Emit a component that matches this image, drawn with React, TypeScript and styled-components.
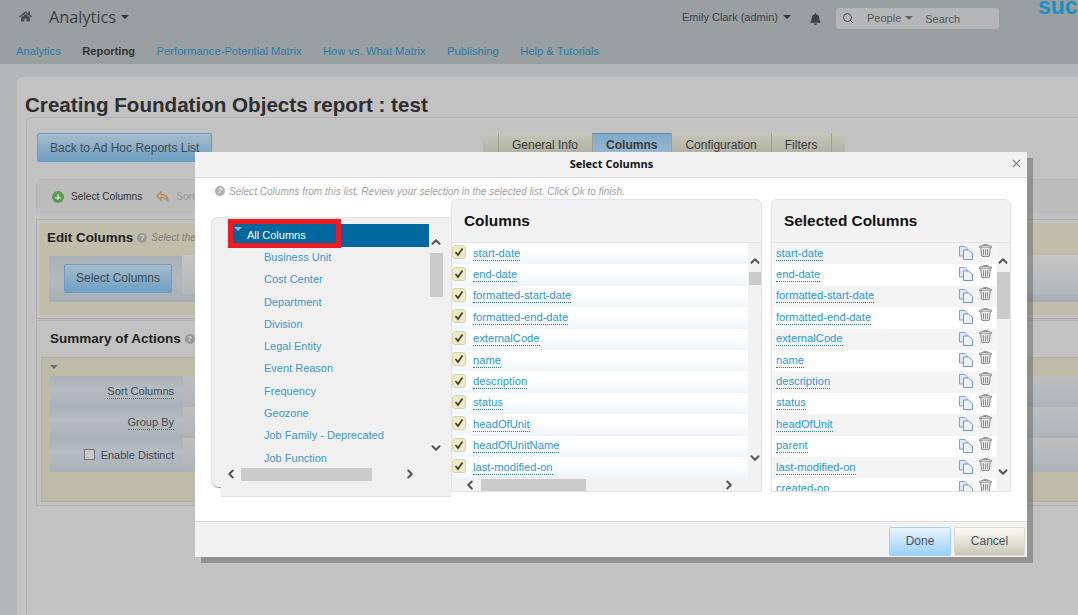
import React from 'react';
import styled, { createGlobalStyle } from 'styled-components';
import { FaHome, FaBell } from 'react-icons/fa';
import { FiSearch, FiX, FiChevronUp, FiChevronDown, FiChevronLeft, FiChevronRight } from 'react-icons/fi';

const GlobalStyle = createGlobalStyle`
  html, body { margin: 0; padding: 0; height: 100%; overflow: hidden; }
  body { background: #b5b6b7; font-family: "Liberation Sans", Arial, sans-serif; color: #333; }
  * { box-sizing: border-box; }
`;

const Page = styled.div`
  position: relative;
  width: 1078px;
  height: 615px;
  overflow: hidden;
`;

const TopHeader = styled.header`
  height: 64px;
  background: #9a9fa2;
  padding: 0 0 0 19px;
  position: relative;
`;

const HeaderRow = styled.div`
  display: flex;
  align-items: center;
  height: 36px;
`;

const HomeIcon = styled(FaHome)`
  width: 13px;
  height: 13px;
  color: #4a4d4e;
  margin-right: 17px;
  margin-top: -3px;
`;

const ModuleTitle = styled.div`
  font-family: "Open Sans", sans-serif;
  font-size: 16.3px;
  color: #3c3f41;
  display: flex;
  align-items: center;
  gap: 5px;
  margin-top: -2px;
`;

const Caret = styled.span<{ $size?: number; $color?: string }>`
  display: inline-block;
  width: 0;
  height: 0;
  border-left: ${p => p.$size ?? 4}px solid transparent;
  border-right: ${p => p.$size ?? 4}px solid transparent;
  border-top: ${p => p.$size ?? 4}px solid ${p => p.$color ?? '#333'};
`;

const UserArea = styled.div`
  margin-left: auto;
  display: flex;
  align-items: center;
  margin-right: 79px;
`;

const UserName = styled.div`
  font-size: 11px;
  color: #3f4245;
  display: flex;
  align-items: center;
  gap: 5px;
  margin-right: 19px;
  margin-top: -2px;
`;

const Bell = styled(FaBell)`
  width: 11px;
  height: 12px;
  color: #3f4245;
  margin-right: 15px;
  margin-top: 1px;
`;

const SearchBox = styled.div`
  width: 163px;
  height: 21px;
  border-radius: 3px;
  background: #b4b6b7;
  display: flex;
  align-items: center;
  padding-left: 6px;
  font-size: 11px;
  color: #55585a;
`;

const SearchGlyph = styled(FiSearch)`
  width: 12px;
  height: 12px;
  color: #4a4d4e;
  margin-right: 13px;
`;

const PeoplePick = styled.span`
  display: flex;
  align-items: center;
  gap: 4px;
  margin-right: 12px;
  margin-top: -1px;
`;

const SearchLabel = styled.span`
  margin-top: 2px;
`;

const Brand = styled.div`
  position: absolute;
  top: -7px;
  left: 1038px;
  font-size: 23px;
  font-weight: 700;
  color: #1c8fc2;
`;

const NavRow = styled.nav`
  display: flex;
  gap: 21.5px;
  margin: 9px 0 0 -3px;
  font-size: 11.2px;
`;

const NavItem = styled.span<{ $active?: boolean }>`
  font-weight: ${p => (p.$active ? 700 : 400)};
  color: ${p => (p.$active ? '#333' : '#2c7da6')};
`;

const Content = styled.main`
  margin: 13px 0 0 17px;
  height: 600px;
  background: #c2c2c2;
  border-radius: 6px 0 0 0;
  padding: 14px 0 0 8px;
`;

const ReportTitle = styled.h1`
  margin: 0;
  font-size: 20.6px;
  line-height: 27px;
  font-weight: 700;
  color: #2f2f2f;
  white-space: nowrap;
`;

const ReportBody = styled.div`
  border: 1px solid #b3b3b3;
  border-right: none;
  border-radius: 6px 0 0 0;
  height: 500px;
  padding: 15px 0 0 10px;
  margin: -1px 0 0 1px;
`;

const TopRow = styled.div`
  display: flex;
  align-items: flex-start;
`;

const BackButton = styled.div`
  width: 175px;
  height: 29px;
  border: 1px solid #6b9dc0;
  border-radius: 2px;
  background: linear-gradient(#a6bccb, #6f9fc4);
  font-size: 12px;
  color: #3d4a54;
  padding: 7px 0 0 12px;
  white-space: nowrap;
`;

const Tabs = styled.div`
  display: flex;
  height: 24px;
  margin-left: 271px;
  background: linear-gradient(#c6c6ba, #adada0);
  border-radius: 8px 8px 0 0;
  padding: 0 13px 0 15px;
  font-size: 12px;
`;

const Tab = styled.div<{ $active?: boolean }>`
  padding: 5px 14px 0 13px;
  color: #3a3a3a;
  white-space: nowrap;
  border-left: 1px solid #a0a096;
  &:last-child { border-right: 1px solid #a0a096; }
  ${p => p.$active && 'background: linear-gradient(#7fa9c9, #a0bad0); font-weight: 700; border-top: 1px solid #5b8fb8; padding-top: 4px;'}
`;

const StepBar = styled.div`
  margin: 17px 0 0 -1px;
  width: 1060px;
  height: 34px;
  border: 1px solid #b5b5b5;
  border-bottom: none;
  border-radius: 6px 0 0 0;
  background: #bcbcbc;
  display: flex;
  align-items: center;
  padding-left: 15px;
  font-size: 10.2px;
  color: #333;
`;

const StepDot = styled.span`
  width: 12px;
  height: 12px;
  border-radius: 50%;
  background: #5a9c5a;
  margin-right: 7px;
  color: #d8e8d8;
  font-size: 11px;
  font-weight: 700;
  line-height: 12px;
  text-align: center;
`;

const SortIcon = styled.svg`
  width: 14px;
  height: 13px;
  margin: 0 6px 0 14px;
`;

const StepFaded = styled.span`
  color: #999;
`;

const EditOuter = styled.section`
  margin: 6px 0 0 -1px;
  border: 1px solid #aeaeae;
  padding: 3px;
  height: 100px;
  width: 1060px;
`;

const EditPanel = styled.div`
  background: #c0bdaa;
  height: 92px;
  padding: 7px 0 0 9px;
`;

const PanelHeading = styled.div`
  font-size: 13.4px;
  line-height: 16px;
  font-weight: 700;
  color: #222;
  display: flex;
  align-items: center;
  gap: 4px;
  margin-left: -2px;
`;

const HintDot = styled.span`
  width: 10px;
  height: 10px;
  border-radius: 50%;
  background: #999;
  color: #ddd;
  font-size: 8px;
  font-weight: 700;
  line-height: 10px;
  text-align: center;
`;

const HintText = styled.span`
  font-size: 10px;
  font-weight: 400;
  font-style: italic;
  color: #808080;
`;

const EditStrip = styled.div`
  margin-top: 10px;
  height: 46px;
  background: linear-gradient(#a8afb6, #b4b9bd 50%, #a6aeb6);
  display: flex;
`;

const StripLabel = styled.div`
  width: 133px;
  padding: 8px 0 0 15px;
`;

const StripField = styled.div`
  flex: 1;
  height: 39px;
  margin-top: -1px;
  background: linear-gradient(#c4c4c4, #bcbebf 55%, #b3b8bc);
`;

const SelectButton = styled.div`
  width: 108px;
  height: 29px;
  border: 1px solid #6b9dc0;
  border-radius: 2px;
  background: linear-gradient(#a6bccb, #6f9fc4);
  font-size: 12px;
  color: #3d4a54;
  text-align: center;
  line-height: 27px;
`;

const SummaryOuter = styled.section`
  margin: 1px 0 0 -1px;
  border: 1px solid #b0b0b0;
  width: 1060px;
  height: 186px;
  padding: 7px 3px 3px 4px;
`;

const SummaryHeading = styled(PanelHeading)`
  font-size: 13.5px;
  margin-left: 0;
  padding-left: 9px;
  height: 22px;
`;

const SummaryPanel = styled.div`
  margin-top: 7px;
  background: #bdbaa8;
  border: 1px solid #b2b2a4;
  height: 145px;
  padding: 7px 0 0 8px;
`;

const SummaryCaret = styled(Caret)`
  display: block;
  margin-bottom: 7px;
`;

const SummaryRow = styled.div<{ $h: number }>`
  height: ${p => p.$h}px;
  display: flex;
`;

const SummaryLabel = styled.div`
  width: 133px;
  background: linear-gradient(#a9b0b7, #b6bcc1 40%, #a9b1b8);
  display: flex;
  align-items: center;
  justify-content: flex-end;
  padding-right: 9px;
  font-size: 11px;
  color: #3e4a55;
`;

const SummaryField = styled.div`
  flex: 1;
  background: linear-gradient(#bcbdbe, #b6babd 60%, #abb1b6);
`;

const DottedLabel = styled.span`
  border-bottom: 1px dotted #4c6a85;
  line-height: 13px;
`;

const MiniCheck = styled.span`
  width: 11px;
  height: 11px;
  border: 1px solid #777;
  background: #c9c9c9;
  margin-right: 6px;
  margin-bottom: 2px;
`;

const Modal = styled.div`
  position: absolute;
  left: 195px;
  top: 152px;
  width: 832px;
  height: 405px;
  background: #fff;
  box-shadow: 6px 6px 0 rgba(90, 90, 90, 0.45);
  display: flex;
  flex-direction: column;
`;

const ModalHeader = styled.div`
  height: 26px;
  background: #f2f2f2;
  border-bottom: 1px solid #d9d9d9;
  display: flex;
  align-items: center;
  justify-content: center;
  position: relative;
  font-family: "Open Sans", sans-serif;
  font-size: 11px;
  font-weight: 700;
  color: #111;
  flex-shrink: 0;
  padding: 0 0 2px 1px;
`;

const CloseIcon = styled(FiX)`
  position: absolute;
  right: 4px;
  top: 5px;
  width: 13px;
  height: 13px;
  color: #7a7a7a;
`;

const ModalBody = styled.div`
  flex: 1;
  padding: 5px 16px 0 16px;
`;

const HelpLine = styled.div`
  display: flex;
  align-items: center;
  gap: 4px;
  padding-left: 4px;
  height: 16px;
  font-size: 10.05px;
  font-style: italic;
  color: #a3a3a3;
`;

const HelpDot = styled(HintDot)`
  background: #b0b0b0;
  color: #f2f2f2;
  margin-top: -1px;
`;

const Panes = styled.div`
  display: flex;
  align-items: flex-start;
`;

const TreePane = styled.div`
  width: 240px;
  height: 280px;
  margin-top: 18px;
  position: relative;
  flex-shrink: 0;
`;

const TreeCard = styled.div`
  width: 240px;
  height: 270px;
  background: #f0f0f0;
  border: 1px solid #e3e3e3;
  border-right: none;
  border-bottom: none;
  border-radius: 6px 0 0 8px;
  padding: 6px 0 0 21px;
  overflow: hidden;
  position: relative;
  box-shadow: 0 2px 1px -1px #999;
`;

const TreeFoot = styled.div`
  position: absolute;
  left: 10px;
  top: 270px;
  width: 230px;
  height: 10px;
  background: #f0f0f0;
  border-bottom: 1px solid #e3e3e3;
`;

const TreeRoot = styled.div`
  width: 196px;
  height: 23px;
  background: #00689f;
  color: #fff;
  font-size: 11px;
  display: flex;
  align-items: center;
  padding: 0 0 2px 14px;
  position: relative;
`;

const TreeArrow = styled(Caret)`
  position: absolute;
  left: 1px;
  top: 3px;
`;

const RedBox = styled.div`
  position: absolute;
  left: 17px;
  top: 2px;
  width: 113px;
  height: 29px;
  border: 5px solid #ed1c24;
  pointer-events: none;
`;

const TreeList = styled.ul`
  list-style: none;
  margin: -1px 0 0;
  padding: 0 0 0 31px;
`;

const TreeItem = styled.li`
  height: 22.3px;
  line-height: 22px;
  font-size: 11px;
  color: #3f97c7;
  white-space: nowrap;
`;

const VBar = styled.div<{ $left: number; $top: number }>`
  position: absolute;
  left: ${p => p.$left}px;
  top: ${p => p.$top}px;
  width: 14px;
  display: flex;
  flex-direction: column;
  align-items: center;
  color: #555;
`;

const Thumb = styled.div<{ $h: number; $mt: number; $mb: number }>`
  width: 13px;
  height: ${p => p.$h}px;
  margin-top: ${p => p.$mt}px;
  margin-bottom: ${p => p.$mb}px;
  background: #cbcbcb;
  flex-shrink: 0;
`;

const ArrowUp = styled(FiChevronUp)`
  width: 14px;
  height: 14px;
  stroke-width: 3.5;
  flex-shrink: 0;
`;

const ArrowDown = styled(FiChevronDown)`
  width: 14px;
  height: 14px;
  stroke-width: 3.5;
  flex-shrink: 0;
`;

const ArrowLeft = styled(FiChevronLeft)`
  width: 14px;
  height: 14px;
  stroke-width: 3.5;
  flex-shrink: 0;
`;

const ArrowRight = styled(FiChevronRight)`
  width: 14px;
  height: 14px;
  stroke-width: 3.5;
  flex-shrink: 0;
`;

const HBar = styled.div<{ $left: number; $top: number }>`
  position: absolute;
  left: ${p => p.$left}px;
  top: ${p => p.$top}px;
  display: flex;
  align-items: center;
  color: #555;
`;

const HThumb = styled.div<{ $w: number; $ml: number; $mr: number }>`
  height: 13px;
  width: ${p => p.$w}px;
  margin-left: ${p => p.$ml}px;
  margin-right: ${p => p.$mr}px;
  background: #cbcbcb;
  flex-shrink: 0;
`;

const ListCard = styled.div<{ $w: number; $ml: number }>`
  width: ${p => p.$w}px;
  margin-left: ${p => p.$ml}px;
  height: 293px;
  background: #f2f2f2;
  border: 1px solid #e3e3e3;
  border-radius: 6px 6px 0 0;
  position: relative;
  overflow: hidden;
  flex-shrink: 0;
`;

const ListTitle = styled.div<{ $pad: number }>`
  height: 43px;
  padding-left: ${p => p.$pad}px;
  line-height: 41px;
  font-size: 15.4px;
  font-weight: 700;
  color: #111;
  border-bottom: 1px solid #e4e4e4;
`;

const Rows = styled.div<{ $w: number; $h: number }>`
  width: ${p => p.$w}px;
  height: ${p => p.$h}px;
  overflow: hidden;
`;

const ColumnRow = styled.div`
  height: 21.4px;
  background: linear-gradient(#fff 40%, #eef5fb);
  display: flex;
  align-items: center;
  font-size: 11.2px;
  color: #2a9ad6;
`;

const Tick = styled.span`
  width: 14px;
  height: 14px;
  margin: -3px 7px 0 0;
  border: 1px solid #d8d3a8;
  border-radius: 3px;
  background: #ecebc8;
  display: flex;
  align-items: center;
  justify-content: center;
  flex-shrink: 0;
`;

const LinkText = styled.span`
  border-bottom: 1px dotted #2a7fb0;
  line-height: 13px;
  white-space: nowrap;
`;

const SelectedRow = styled.div<{ $odd: boolean }>`
  height: 21.4px;
  background: ${p => (p.$odd ? '#f4f4f4' : '#fff')};
  display: flex;
  align-items: center;
  padding-left: 4px;
  font-size: 11.2px;
  color: #2a9ad6;
`;

const RowIcons = styled.span`
  margin-left: auto;
  align-self: flex-start;
  display: flex;
  align-items: flex-start;
  gap: 6px;
  padding: 1px 5px 0 0;
`;

const CopySvg = styled.svg`
  margin-top: 2px;
`;

const ModalFooter = styled.div`
  height: 36px;
  background: #f2f2f2;
  border-top: 1px solid #dcdcdc;
  display: flex;
  justify-content: flex-end;
  align-items: flex-start;
  gap: 3px;
  padding: 5px 2px 0 0;
  flex-shrink: 0;
`;

const FooterButton = styled.div<{ $primary?: boolean }>`
  width: ${p => (p.$primary ? 62 : 71)}px;
  height: 29px;
  border-radius: 2px;
  border: 1px solid ${p => (p.$primary ? '#9fd0f5' : '#dcdacb')};
  background: ${p => (p.$primary ? 'linear-gradient(#eaf5fd, #99d0fb)' : 'linear-gradient(#fbfbf6, #c9c8b8)')};
  font-size: 12px;
  color: #4a5058;
  text-align: center;
  line-height: 27px;
`;

const CheckMark = () => (
  <svg width="10" height="10" viewBox="0 0 10 10">
    <path d="M1.5 5l2.5 3 4.5-6.5" fill="none" stroke="#4a3a28" strokeWidth="1.7" />
  </svg>
);

const CopyIcon = () => (
  <CopySvg width="14" height="14" viewBox="0 0 14 14">
    <path d="M.5.5h5.5l2 2v7.5H.5z" fill="#dfe8f7" stroke="#7f9fd6" />
    <path d="M4.5 4h5l4 3.5v6h-9z" fill="#eef3fb" stroke="#7396d4" />
  </CopySvg>
);

const TrashIcon = () => (
  <svg width="13" height="13" viewBox="0 0 13 13">
    <path d="M4.5 1.5V.5h4v1" fill="none" stroke="#999" />
    <path d="M.5 2.5c2-1.2 10-1.2 12 0v1c-2 .8-10 .8-12 0z" fill="#ddd" stroke="#808080" />
    <path d="M1.8 4l.8 8c1 .9 6.8 .9 7.8 0l.8-8" fill="#eee" stroke="#808080" />
    <path d="M4.5 5.2v6M6.5 5.4v6.2M8.5 5.2v6" stroke="#8a8a8a" />
  </svg>
);

const tree = ['Business Unit', 'Cost Center', 'Department', 'Division', 'Legal Entity', 'Event Reason', 'Frequency', 'Geozone', 'Job Family - Deprecated', 'Job Function'];
const columns = ['start-date', 'end-date', 'formatted-start-date', 'formatted-end-date', 'externalCode', 'name', 'description', 'status', 'headOfUnit', 'headOfUnitName', 'last-modified-on'];
const selected = ['start-date', 'end-date', 'formatted-start-date', 'formatted-end-date', 'externalCode', 'name', 'description', 'status', 'headOfUnit', 'parent', 'last-modified-on', 'created-on'];

const App: React.FC = () => (
  <Page>
    <GlobalStyle />
    <TopHeader>
      <HeaderRow>
        <HomeIcon />
        <ModuleTitle>Analytics <Caret /></ModuleTitle>
        <UserArea>
          <UserName>Emily Clark (admin) <Caret /></UserName>
          <Bell />
          <SearchBox>
            <SearchGlyph />
            <PeoplePick>People <Caret $color="#666" /></PeoplePick>
            <SearchLabel>Search</SearchLabel>
          </SearchBox>
        </UserArea>
      </HeaderRow>
      <NavRow>
        <NavItem>Analytics</NavItem>
        <NavItem $active>Reporting</NavItem>
        <NavItem>Performance-Potential Matrix</NavItem>
        <NavItem>How vs. What Matrix</NavItem>
        <NavItem>Publishing</NavItem>
        <NavItem>Help &amp; Tutorials</NavItem>
      </NavRow>
      <Brand>succ</Brand>
    </TopHeader>
    <Content>
      <ReportTitle>Creating Foundation Objects report : test</ReportTitle>
      <ReportBody>
        <TopRow>
          <BackButton>Back to Ad Hoc Reports List</BackButton>
          <Tabs>
            <Tab>General Info</Tab>
            <Tab $active>Columns</Tab>
            <Tab>Configuration</Tab>
            <Tab>Filters</Tab>
          </Tabs>
        </TopRow>
        <StepBar>
          <StepDot>+</StepDot>
          Select Columns
          <SortIcon viewBox="0 0 14 13">
            <path d="M1 6l4-4v2.5c4 0 7 2 7 7-1-3-3-4-7-4V10z" fill="none" stroke="#b98f5a" strokeWidth="1.6" />
          </SortIcon>
          <StepFaded>Sort</StepFaded>
        </StepBar>
        <EditOuter>
          <EditPanel>
            <PanelHeading>
              Edit Columns <HintDot>?</HintDot> <HintText>Select the</HintText>
            </PanelHeading>
            <EditStrip>
              <StripLabel>
                <SelectButton>Select Columns</SelectButton>
              </StripLabel>
              <StripField />
            </EditStrip>
          </EditPanel>
        </EditOuter>
        <SummaryOuter>
          <SummaryHeading>Summary of Actions <HintDot>?</HintDot></SummaryHeading>
          <SummaryPanel>
            <SummaryCaret $size={4} $color="#6e6e6e" />
            <SummaryRow $h={31}>
              <SummaryLabel><DottedLabel>Sort Columns</DottedLabel></SummaryLabel>
              <SummaryField />
            </SummaryRow>
            <SummaryRow $h={31}>
              <SummaryLabel><DottedLabel>Group By</DottedLabel></SummaryLabel>
              <SummaryField />
            </SummaryRow>
            <SummaryRow $h={34}>
              <SummaryLabel><MiniCheck />Enable Distinct</SummaryLabel>
              <SummaryField />
            </SummaryRow>
          </SummaryPanel>
        </SummaryOuter>
      </ReportBody>
    </Content>

    <Modal>
      <ModalHeader>
        Select Columns
        <CloseIcon />
      </ModalHeader>
      <ModalBody>
        <HelpLine>
          <HelpDot>?</HelpDot>
          Select Columns from this list. Review your selection in the selected list. Click Ok to finish.
        </HelpLine>
        <Panes>
          <TreePane>
            <TreeCard>
              <TreeRoot>
                <TreeArrow $size={4} $color="#9fb4c2" />
                All Columns
              </TreeRoot>
              <TreeList>
                {tree.map(t => <TreeItem key={t}>{t}</TreeItem>)}
              </TreeList>
              <VBar $left={217} $top={17}>
                <ArrowUp />
                <Thumb $h={44} $mt={4} $mb={144} />
                <ArrowDown />
              </VBar>
              <HBar $left={12} $top={249}>
                <ArrowLeft />
                <HThumb $w={131} $ml={3} $mr={31} />
                <ArrowRight />
              </HBar>
            </TreeCard>
            <TreeFoot />
            <RedBox />
          </TreePane>
          <ListCard $w={311} $ml={0}>
            <ListTitle $pad={12}>Columns</ListTitle>
            <Rows $w={296} $h={235}>
              {columns.map(c => (
                <ColumnRow key={c}>
                  <Tick><CheckMark /></Tick>
                  <LinkText>{c}</LinkText>
                </ColumnRow>
              ))}
            </Rows>
            <VBar $left={296} $top={54}>
              <ArrowUp />
              <Thumb $h={13} $mt={4} $mb={166} />
              <ArrowDown />
            </VBar>
            <HBar $left={11} $top={278}>
              <ArrowLeft />
              <HThumb $w={105} $ml={4} $mr={136} />
              <ArrowRight />
            </HBar>
          </ListCard>
          <ListCard $w={240} $ml={9}>
            <ListTitle $pad={12}>Selected Columns</ListTitle>
            <Rows $w={225} $h={248}>
              {selected.map((c, i) => (
                <SelectedRow key={c} $odd={i % 2 === 0}>
                  <LinkText>{c}</LinkText>
                  <RowIcons><CopyIcon /><TrashIcon /></RowIcons>
                </SelectedRow>
              ))}
            </Rows>
            <VBar $left={224} $top={54}>
              <ArrowUp />
              <Thumb $h={47} $mt={4} $mb={146} />
              <ArrowDown />
            </VBar>
          </ListCard>
        </Panes>
      </ModalBody>
      <ModalFooter>
        <FooterButton $primary>Done</FooterButton>
        <FooterButton>Cancel</FooterButton>
      </ModalFooter>
    </Modal>
  </Page>
);

export default App;
